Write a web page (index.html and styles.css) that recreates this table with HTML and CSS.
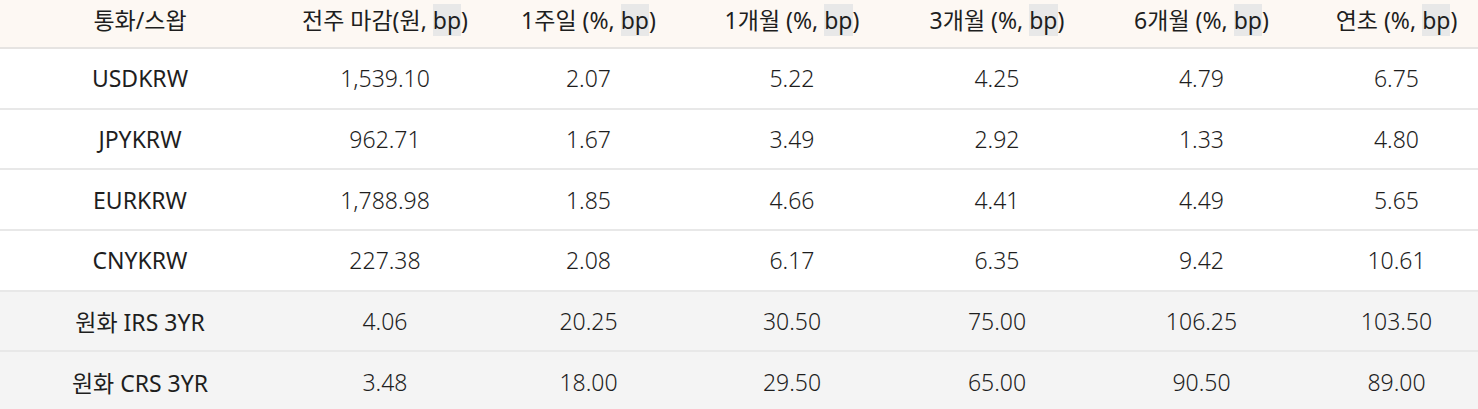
FILE: index.html
```html
<!DOCTYPE html>
<html lang="ko">
<head>
<meta charset="utf-8">
<link rel="stylesheet" href="styles.css">
</head>
<body>
<div class="wrap">
<table class="rates">
  <colgroup>
    <col class="c1"><col class="c2"><col class="c3"><col class="c4"><col class="c5"><col class="c6"><col class="c7">
  </colgroup>
  <thead>
    <tr>
      <th>통화/스왑</th>
      <th>전주 마감(원, <span class="hl">bp</span>)</th>
      <th>1주일 (%, <span class="hl">bp</span>)</th>
      <th>1개월 (%, <span class="hl">bp</span>)</th>
      <th>3개월 (%, <span class="hl">bp</span>)</th>
      <th>6개월 (%, <span class="hl">bp</span>)</th>
      <th>연초 (%, <span class="hl">bp</span>)</th>
    </tr>
  </thead>
  <tbody>
    <tr><td class="name">USDKRW</td><td>1,539.10</td><td>2.07</td><td>5.22</td><td>4.25</td><td>4.79</td><td>6.75</td></tr>
    <tr><td class="name">JPYKRW</td><td>962.71</td><td>1.67</td><td>3.49</td><td>2.92</td><td>1.33</td><td>4.80</td></tr>
    <tr><td class="name">EURKRW</td><td>1,788.98</td><td>1.85</td><td>4.66</td><td>4.41</td><td>4.49</td><td>5.65</td></tr>
    <tr><td class="name">CNYKRW</td><td>227.38</td><td>2.08</td><td>6.17</td><td>6.35</td><td>9.42</td><td>10.61</td></tr>
    <tr class="swap"><td class="name">원화 IRS 3YR</td><td>4.06</td><td>20.25</td><td>30.50</td><td>75.00</td><td>106.25</td><td>103.50</td></tr>
    <tr class="swap"><td class="name">원화 CRS 3YR</td><td>3.48</td><td>18.00</td><td>29.50</td><td>65.00</td><td>90.50</td><td>89.00</td></tr>
  </tbody>
</table>
</div>
</body>
</html>
```

FILE: styles.css
```css
html, body {
  margin: 0;
  padding: 0;
  background: #ffffff;
}
.wrap {
  width: 1478px;
  overflow: hidden;
}
.rates {
  width: 1487px;
  table-layout: fixed;
  border-collapse: collapse;
  font-family: "Noto Sans", "Noto Sans CJK KR", sans-serif;
  color: #1e1e1e;
}
.c1 { width: 280px; }
.c2 { width: 210px; }
.c3 { width: 197px; }
.c4 { width: 210px; }
.c5 { width: 200px; }
.c6 { width: 209px; }
.c7 { width: 181px; }
.rates th {
  padding: 0 0 8px 0;
  background: #fdf8f3;
  font-size: 23px;
  font-weight: 400;
  text-align: center;
  vertical-align: middle;
  border-bottom: 2px solid #e6e4e2;
  line-height: 30px;
  box-sizing: border-box;
  height: 48px;
}
.hl {
  background: #e8e8e8;
}
.rates td {
  height: 60.7px;
  box-sizing: border-box;
  padding: 0;
  text-align: center;
  vertical-align: middle;
  font-size: 23px;
  font-weight: 300;
  border-bottom: 2px solid #e8e8e8;
}
.rates td.name {
  font-weight: 400;
}
.rates tr.swap td {
  background: #f4f4f4;
}
```
